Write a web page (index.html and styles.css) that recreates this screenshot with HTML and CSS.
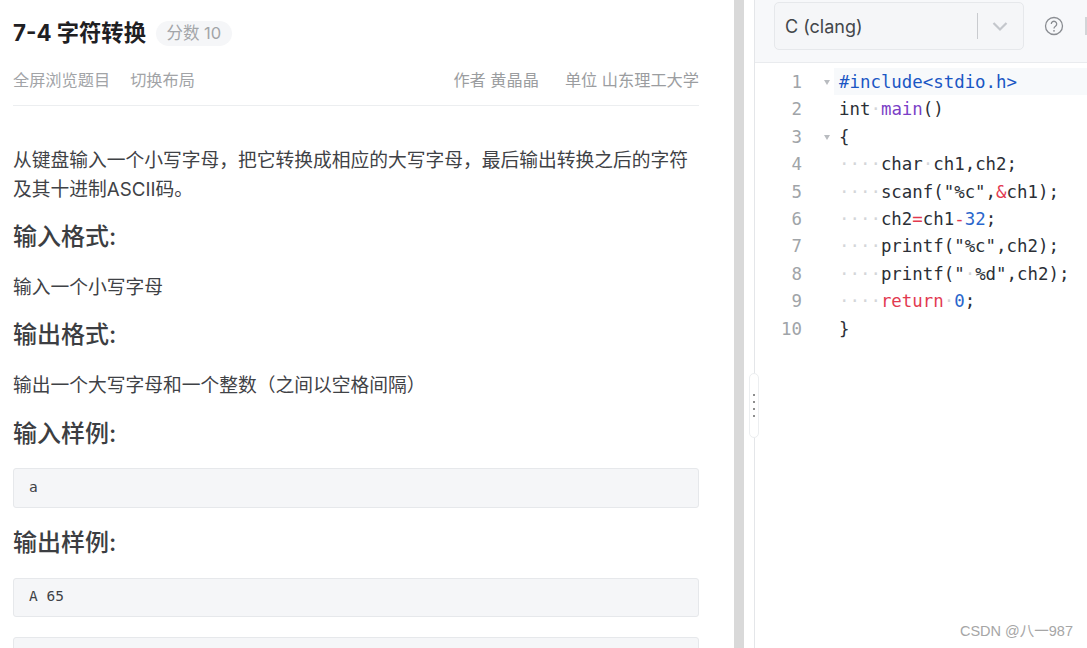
FILE: index.html
```html
<!DOCTYPE html>
<html lang="zh-CN">
<head>
<meta charset="utf-8">
<title>7-4 字符转换</title>
<link rel="stylesheet" href="styles.css">
</head>
<body>
<div class="app">
  <main class="problem">
    <div class="title-row">
      <h1 class="title">7-4 字符转换</h1>
      <span class="score">分数 10</span>
    </div>
    <div class="meta">
      <div class="meta-links"><span>全屏浏览题目</span><span>切换布局</span></div>
      <div class="meta-info"><span>作者 黄晶晶</span><span>单位 山东理工大学</span></div>
    </div>
    <p class="para para-first">从键盘输入一个小写字母，把它转换成相应的大写字母，最后输出转换之后的字符及其十进制ASCII码。</p>
    <h2 class="heading">输入格式:</h2>
    <p class="para">输入一个小写字母</p>
    <h2 class="heading">输出格式:</h2>
    <p class="para">输出一个大写字母和一个整数（之间以空格间隔）</p>
    <h2 class="heading heading-in">输入样例:</h2>
    <pre class="sample">a</pre>
    <h2 class="heading heading-out">输出样例:</h2>
    <pre class="sample sample-out">A 65</pre>
    <pre class="sample sample-next"> </pre>
  </main>
  <div class="divider"></div>
  <section class="workspace">
    <div class="handle"><i></i><i></i><i></i><i></i></div>
    <div class="editor-pane">
      <header class="toolbar">
        <div class="select">
          <span class="select-label">C (clang)</span>
          <span class="select-sep"></span>
          <svg class="chev" width="18" height="18" viewBox="0 0 18 18"><path d="M2.500 6l6.500 6.500L15.500 6" fill="none" stroke="#c4c7cc" stroke-width="2.200"/></svg>
        </div>
        <svg class="help" width="20" height="20" viewBox="0 0 20 20"><circle cx="10" cy="10" r="8.500" fill="none" stroke="#8a8d92" stroke-width="1.300"/><path d="M7.300 8a2.700 2.700 0 1 1 4.200 2.200c-1 .7-1.500 1.100-1.500 2.300" fill="none" stroke="#8a8d92" stroke-width="1.300"/><circle cx="10" cy="14.800" r=".9" fill="#8a8d92"/></svg>
        <span class="tool-next"></span>
      </header>
      <div class="code">
        <div class="line active"><span class="no">1</span><span class="fold"><i class="tri"></i></span><code><span class="kw-blue">#include&lt;stdio.h&gt;</span></code></div>
        <div class="line"><span class="no">2</span><span class="fold"></span><code>int<span class="ws">·</span><span class="fn">main</span>()</code></div>
        <div class="line"><span class="no">3</span><span class="fold"><i class="tri"></i></span><code>{</code></div>
        <div class="line"><span class="no">4</span><span class="fold"></span><code><span class="ws">····</span>char<span class="ws">·</span>ch1,ch2;</code></div>
        <div class="line"><span class="no">5</span><span class="fold"></span><code><span class="ws">····</span>scanf("%c",<span class="red">&amp;</span>ch1);</code></div>
        <div class="line"><span class="no">6</span><span class="fold"></span><code><span class="ws">····</span>ch2<span class="red">=</span>ch1<span class="red">-</span><span class="num">32</span>;</code></div>
        <div class="line"><span class="no">7</span><span class="fold"></span><code><span class="ws">····</span>printf("%c",ch2);</code></div>
        <div class="line"><span class="no">8</span><span class="fold"></span><code><span class="ws">····</span>printf("<span class="ws">·</span>%d",ch2);</code></div>
        <div class="line"><span class="no">9</span><span class="fold"></span><code><span class="ws">····</span><span class="red">return</span><span class="ws">·</span><span class="num">0</span>;</code></div>
        <div class="line"><span class="no">10</span><span class="fold"></span><code>}</code></div>
      </div>
    </div>
    <div class="watermark">CSDN @八一987</div>
  </section>
</div>
</body>
</html>
```
FILE: styles.css
```css
* { box-sizing: border-box; }
html, body { margin: 0; height: 100%; overflow: hidden; background: #fff; }
body { font-family: "Inter", "Noto Sans CJK SC", sans-serif; color: #3f4246; }
.app { display: flex; width: 1087px; height: 648px; overflow: hidden; }

.problem { width: 734px; flex: none; height: 648px; overflow: hidden; padding: 16px 35px 0 13px; background: #fff; }
.title-row { display: flex; align-items: center; height: 34px; }
.title { margin: 0; font-size: 22.300px; line-height: 34px; font-weight: 700; color: #1f2023; }
.score { margin-left: 10px; height: 25px; padding: 0 10.500px; border-radius: 13px; background: #f5f6f8; color: #a3a5a8; font-size: 16.500px; line-height: 25px; }
.meta { display: flex; justify-content: space-between; align-items: center; height: 56px; padding: 8px 0 6px; border-bottom: 1px solid #eceef0; color: #a2a4a7; font-size: 16.200px; }
.meta-links, .meta-info { display: flex; gap: 20px; }
.meta-info { gap: 26px; color: #9b9da0; }

.para { margin: 0; font-size: 18.750px; line-height: 29px; color: #3f4246; }
.para-first { margin-top: 40px; }
.heading { margin: 16px 0 0; font-size: 24px; line-height: 34px; font-weight: 500; color: #3c3e42; }
.heading + .para { margin-top: 19px; }
.heading-in { margin-top: 17px; }
.sample { margin: 17px 0 0; height: 40px; padding: 0 15px; background: #f5f6f8; border: 1px solid #e6e8eb; border-radius: 3px; font-family: "DejaVu Sans Mono", monospace; font-size: 14.500px; line-height: 37px; color: #3f4246; }
.heading-out { margin-top: 18px; }
.sample-out { margin-top: 18px; height: 39px; line-height: 35px; }
.sample-next { margin-top: 20px; }

.divider { width: 10px; flex: none; background: #d9d9d9; }
.workspace { position: relative; flex: 1; min-width: 0; display: flex; padding-left: 10px; background: #fff; }
.editor-pane { flex: 1; min-width: 0; border-left: 1px solid #e4e6e9; }
.handle { position: absolute; left: 5px; top: 373px; width: 10px; height: 65px; display: flex; flex-direction: column; align-items: center; justify-content: center; gap: 5px; background: #fff; border: 1px solid #eceef0; border-radius: 6px; }
.handle i { width: 2px; height: 2px; background: #8e8e8e; }

.toolbar { height: 63px; display: flex; align-items: flex-start; padding: 2px 0 0 19px; background: #f7f8fa; border-bottom: 1px solid #e9ebee; overflow: hidden; }
.select { width: 250px; flex: none; height: 48px; display: flex; align-items: center; padding: 0 14px 0 10px; background: #f5f6f8; border: 1px solid #e6e8eb; border-radius: 5px; }
.select-label { flex: 1; font-size: 18px; color: #43464a; }
.select-sep { width: 1px; height: 26px; background: #c9cbcf; margin-right: 13px; }
.help { margin: 14px 0 0 20px; flex: none; }
.tool-next { width: 3px; height: 18px; flex: none; margin: 15px 0 0 21px; border-left: 2px solid #d3d5d8; }

.code { padding-top: 5px; font-family: "DejaVu Sans Mono", monospace; font-size: 17.400px; color: #2b2f36; }
.line { display: flex; height: 27.400px; line-height: 25px; }
.no { width: 47px; flex: none; text-align: right; color: #a0a4a8; font-size: 17.400px; padding-top: 2px; }
.fold { width: 32px; flex: none; padding: 12px 0 0 22px; }
.tri { display: block; width: 0; height: 0; border-left: 3.500px solid transparent; border-right: 3.500px solid transparent; border-top: 5px solid #b9bcc0; }
.line code { font: inherit; white-space: pre; padding: 2px 0 0 5px; line-height: 25px; flex: 1; }
.active code { background: #f7f9fb; }
.kw-blue { color: #1a56c4; }
.fn { color: #7b3fc6; }
.red { color: #e23a50; }
.num { color: #2a66cc; }
.ws { color: #d4d6d9; }

.watermark { position: absolute; right: 14px; top: 622px; font-family: "Liberation Sans", "Noto Sans CJK SC", sans-serif; font-size: 14.500px; line-height: 18px; color: #a6a6a6; }
```
